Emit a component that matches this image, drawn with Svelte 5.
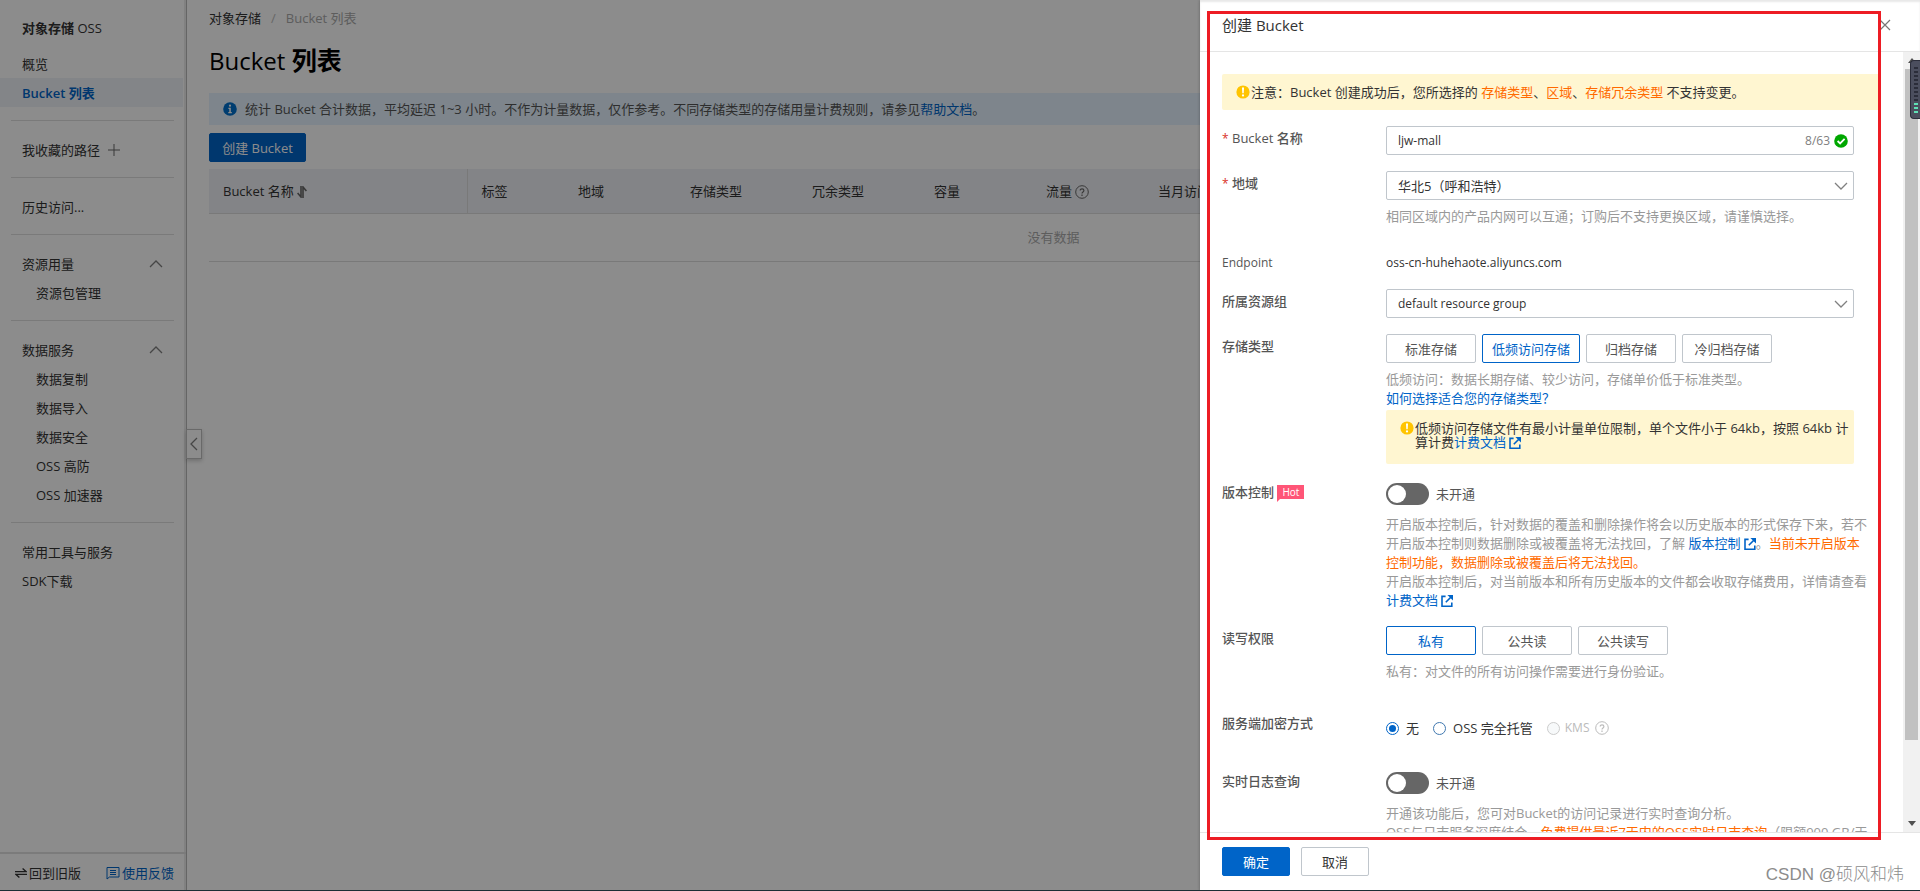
<script lang="ts">
  type NavItem = { label: string; active?: boolean; child?: boolean; icon?: "plus" | "up" };

  const navGroups: NavItem[][] = [
    [{ label: "概览" }, { label: "Bucket 列表", active: true }],
    [{ label: "我收藏的路径", icon: "plus" }],
    [{ label: "历史访问..." }],
    [
      { label: "资源用量", icon: "up" },
      { label: "资源包管理", child: true },
    ],
    [
      { label: "数据服务", icon: "up" },
      { label: "数据复制", child: true },
      { label: "数据导入", child: true },
      { label: "数据安全", child: true },
      { label: "OSS 高防", child: true },
      { label: "OSS 加速器", child: true },
    ],
    [{ label: "常用工具与服务" }, { label: "SDK下载" }],
  ];

  const storageTypes = ["标准存储", "低频访问存储", "归档存储", "冷归档存储"];
  const aclTypes = ["私有", "公共读", "公共读写"];

  let bucketName = $state("ljw-mall");
  let storageType = $state("低频访问存储");
  let acl = $state("私有");
  let encryption = $state("none");
  let versioning = $state(false);
  let realtimeLog = $state(false);
</script>

{#snippet chevron(cls: string)}
  <svg class="chevron {cls}" viewBox="0 0 14 8" aria-hidden="true">
    <path d="M1 1l6 6 6-6" fill="none" stroke="currentColor" stroke-width="1.3" />
  </svg>
{/snippet}

{#snippet warnIcon()}
  <svg class="icon warn" viewBox="0 0 14 14" aria-hidden="true">
    <circle cx="7" cy="7" r="6.6" fill="#ffc400" />
    <path d="M6 2.6h2l-.3 5.6H6.3z" fill="#fff" />
    <circle cx="7" cy="10.4" r="1.1" fill="#fff" />
  </svg>
{/snippet}

{#snippet helpIcon()}
  <svg class="icon" viewBox="0 0 14 14" fill="none" stroke="currentColor" aria-hidden="true">
    <circle cx="7" cy="7" r="6.3" />
    <path d="M5.2 5.6c0-2.4 3.7-2.3 3.7 0 0 1.4-1.9 1.4-1.9 3M7 9.6v1.3" stroke-width="1.2" />
  </svg>
{/snippet}

{#snippet extIcon()}
  <svg class="ext" viewBox="0 0 12 12" fill="none" stroke="currentColor" aria-hidden="true">
    <path d="M4.6 1.4H1v9.8h9.8V7.6M4.8 7.2l5-5" stroke-width="1.6" />
    <path d="M6.4 0H12v5.6z" fill="currentColor" stroke="none" />
  </svg>
{/snippet}

<div class="page" lang="zh-CN">
  <aside class="sidebar">
    <div class="product">对象存储 <span>OSS</span></div>
    <nav>
      {#each navGroups as group}
        <ul>
          {#each group as item}
            <li>
              <a href="#nav" class:active={item.active} class:child={item.child}>
                {item.label}
                {#if item.icon === "plus"}
                  <svg class="plus" viewBox="0 0 12 12" aria-hidden="true">
                    <path d="M6 0v12M0 6h12" stroke="currentColor" />
                  </svg>
                {:else if item.icon === "up"}
                  {@render chevron("up")}
                {/if}
              </a>
            </li>
          {/each}
        </ul>
      {/each}
    </nav>
    <div class="side-footer">
      <a href="#old">
        <svg class="swap" viewBox="0 0 12 10" fill="none" stroke="currentColor" aria-hidden="true">
          <path d="M0 3.6h11L7.6.6M12 6.4H1l3.4 3" stroke-width="1.4" />
        </svg>回到旧版
      </a>
      <a href="#feedback" class="link">
        <svg class="icon" viewBox="0 0 14 14" fill="none" stroke="currentColor" aria-hidden="true">
          <path d="M1 1.5h12v9.5H3.5L1 13zM4 4.5h6M4 6.5h6M4 8.5h6" />
        </svg>使用反馈
      </a>
    </div>
    <button class="collapse" aria-label="收起">{@render chevron("left")}</button>
  </aside>

  <main>
    <div class="breadcrumb"><a href="#oss">对象存储</a><i>/</i><span>Bucket 列表</span></div>
    <h1><span>Bucket</span> 列表</h1>
    <div class="notice">
      <svg class="icon" viewBox="0 0 14 14" aria-hidden="true">
        <circle cx="7" cy="7" r="6.8" fill="#0070cc" />
        <path d="M5.4 5.8h2.4V10h1v1.2H5.3V10h1V7h-.9z" fill="#fff" />
        <circle cx="7" cy="3.7" r="1.1" fill="#fff" />
      </svg>
      <p>统计 Bucket 合计数据，平均延迟 1~3 小时。不作为计量数据，仅作参考。不同存储类型的存储用量计费规则，请参见<a class="link" href="#help">帮助文档</a>。</p>
    </div>
    <button class="btn primary create">创建 Bucket</button>
    <table>
      <colgroup>
        <col class="c-name" /><col class="c-tag" /><col class="c-mid" /><col class="c-type" />
        <col class="c-type" /><col class="c-mid" /><col class="c-mid" /><col />
      </colgroup>
      <thead>
        <tr>
          <th>
            Bucket 名称
            <svg class="sort" viewBox="0 0 10 12" fill="none" stroke="currentColor" aria-hidden="true">
              <path d="M4 0v11L.6 7M6 12V1l3.4 4" stroke-width="1.6" />
            </svg>
          </th>
          <th>标签</th>
          <th>地域</th>
          <th>存储类型</th>
          <th>冗余类型</th>
          <th>容量</th>
          <th>流量 {@render helpIcon()}</th>
          <th>当月访问次数</th>
        </tr>
      </thead>
      <tbody>
        <tr><td colspan="8">没有数据</td></tr>
      </tbody>
    </table>
  </main>

  <div class="overlay"></div>

  <section class="drawer" role="dialog" aria-labelledby="drawer-title">
    <header>
      <h2 id="drawer-title">创建 Bucket</h2>
      <button class="close" aria-label="关闭">
        <svg viewBox="0 0 12 12" aria-hidden="true">
          <path d="M1 1l10 10M11 1L1 11" stroke="currentColor" stroke-width="1.2" />
        </svg>
      </button>
    </header>

    <div class="body">
      <form>
        <div class="tip">
          {@render warnIcon()}注意：Bucket 创建成功后，您所选择的 <em>存储类型</em>、<em>区域</em>、<em>存储冗余类型</em> 不支持变更。
        </div>

        <div class="row">
          <label class="label" for="bucket-name"><b>*</b> Bucket 名称</label>
          <div class="control field">
            <input id="bucket-name" type="text" maxlength="63" bind:value={bucketName} />
            <span class="count">{bucketName.length}/63</span>
            <svg class="icon" viewBox="0 0 14 14" aria-hidden="true">
              <circle cx="7" cy="7" r="6.8" fill="#00a700" />
              <path d="M3.6 7l2.5 2.4 4.5-4.6" fill="none" stroke="#fff" stroke-width="1.8" />
            </svg>
          </div>
        </div>

        <div class="row">
          <label class="label" for="region"><b>*</b> 地域</label>
          <div class="control">
            <div class="field">
              <select id="region"><option>华北5（呼和浩特）</option></select>
              {@render chevron("")}
            </div>
            <p class="help loose">相同区域内的产品内网可以互通；订购后不支持更换区域，请谨慎选择。</p>
          </div>
        </div>

        <div class="row endpoint">
          <span class="label latin">Endpoint</span>
          <div class="control latin">oss-cn-huhehaote.aliyuncs.com</div>
        </div>

        <div class="row">
          <label class="label" for="group">所属资源组</label>
          <div class="control field">
            <select id="group" class="latin"><option>default resource group</option></select>
            {@render chevron("")}
          </div>
        </div>

        <div class="row">
          <span class="label">存储类型</span>
          <div class="control">
            <div class="options">
              {#each storageTypes as type}
                <button type="button" class="btn" class:selected={type === storageType} onclick={() => (storageType = type)}>{type}</button>
              {/each}
            </div>
            <p class="help">
              低频访问：数据长期存储、较少访问，存储单价低于标准类型。<br />
              <a class="link" href="#choose">如何选择适合您的存储类型？</a>
            </p>
            <div class="subtip">
              {@render warnIcon()}
              <p>低频访问存储文件有最小计量单位限制，单个文件小于 64kb，按照 64kb 计<br />算计费<a class="link" href="#price">计费文档 {@render extIcon()}</a></p>
            </div>
          </div>
        </div>

        <div class="row">
          <label class="label" for="versioning">版本控制 <span class="hot">Hot</span></label>
          <div class="control">
            <div class="toggle">
              <input id="versioning" type="checkbox" role="switch" bind:checked={versioning} />
              <span>{versioning ? "已开通" : "未开通"}</span>
            </div>
            <p class="help">
              开启版本控制后，针对数据的覆盖和删除操作将会以历史版本的形式保存下来，若不<br />
              开启版本控制则数据删除或被覆盖将无法找回，了解 <a class="link" href="#version">版本控制 {@render extIcon()}</a>。<em>当前未开启版本</em><br />
              <em>控制功能，数据删除或被覆盖后将无法找回。</em><br />
              开启版本控制后，对当前版本和所有历史版本的文件都会收取存储费用，详情请查看<br />
              <a class="link" href="#price">计费文档 {@render extIcon()}</a>
            </p>
          </div>
        </div>

        <div class="row">
          <span class="label">读写权限</span>
          <div class="control">
            <div class="options">
              {#each aclTypes as type}
                <button type="button" class="btn" class:selected={type === acl} onclick={() => (acl = type)}>{type}</button>
              {/each}
            </div>
            <p class="help loose">私有：对文件的所有访问操作需要进行身份验证。</p>
          </div>
        </div>

        <div class="row encryption">
          <span class="label">服务端加密方式</span>
          <div class="control radios">
            <label><input type="radio" name="enc" value="none" bind:group={encryption} />无</label>
            <label><input type="radio" name="enc" value="oss" bind:group={encryption} />OSS 完全托管</label>
            <label class="disabled"><input type="radio" name="enc" value="kms" disabled bind:group={encryption} />KMS {@render helpIcon()}</label>
          </div>
        </div>

        <div class="row">
          <label class="label" for="realtime">实时日志查询</label>
          <div class="control">
            <div class="toggle">
              <input id="realtime" type="checkbox" role="switch" bind:checked={realtimeLog} />
              <span>{realtimeLog ? "已开通" : "未开通"}</span>
            </div>
            <p class="help">
              开通该功能后，您可对Bucket的访问记录进行实时查询分析。<br />
              OSS与日志服务深度结合，<em>免费提供最近7天内的OSS实时日志查询</em>（限额900 GB/天
            </p>
          </div>
        </div>
      </form>
      <div class="scrollbar" aria-hidden="true">
        <svg viewBox="0 0 17 17"><path d="M5 11l4-5 4 5z" fill="#505050" /></svg>
        <div class="track"><div class="thumb"></div></div>
        <svg viewBox="0 0 17 17"><path d="M5 6l4 5 4-5z" fill="#505050" /></svg>
      </div>
    </div>

    <footer>
      <button class="btn primary">确定</button>
      <button class="btn">取消</button>
    </footer>

    <div class="marker"></div>
    <div class="meter" aria-hidden="true"></div>
    <div class="watermark">CSDN @硕风和炜</div>
  </section>

  <div class="edge"></div>
</div>

<style>
  :global(body) {
    margin: 0;
    overflow: hidden;
  }

  .page {
    position: relative;
    display: flex;
    height: 100vh;
    overflow: hidden;
    background: #fff;
    color: #333;
    font: 13px/20px "Open Sans", "Noto Sans CJK SC", sans-serif;
  }

  .page * {
    box-sizing: border-box;
  }

  a {
    color: inherit;
    text-decoration: none;
  }

  p,
  ul,
  h1,
  h2 {
    margin: 0;
    padding: 0;
  }

  ul {
    list-style: none;
  }

  em {
    color: #ff6a00;
    font-style: normal;
  }

  button,
  input,
  select {
    font: inherit;
    color: inherit;
  }

  .link {
    color: #0064c8;
  }

  .latin {
    font-size: 12px;
  }

  .icon {
    width: 14px;
    height: 14px;
    flex: none;
  }

  .chevron {
    width: 14px;
    height: 8px;
    color: #808080;
  }

  .chevron.up {
    transform: rotate(180deg);
    margin-left: auto;
  }

  .chevron.left {
    transform: rotate(90deg);
    flex: none;
  }

  .ext {
    width: 12px;
    height: 12px;
    vertical-align: -2px;
  }

  /* sidebar */
  .sidebar {
    position: relative;
    display: flex;
    flex: none;
    flex-direction: column;
    width: 187px;
    border-right: 1px solid #b8b8b8;
    box-shadow: inset -2px 0 0 #ebebeb;
  }

  .product {
    padding: 18px 22px 11px;
    font-weight: 600;
  }

  .product span {
    font-weight: 400;
  }

  nav {
    flex: 1;
  }

  nav ul + ul::before {
    content: "";
    display: block;
    margin: 13px 12px 14px 11px;
    border-top: 1px solid #dedede;
  }

  nav a {
    display: flex;
    align-items: center;
    height: 29px;
    margin-right: 3px;
    padding: 0 20px 0 22px;
  }

  nav a.child {
    padding-left: 36px;
  }

  nav a.active {
    background: #eff3f8;
    color: #0064c8;
    font-weight: 600;
  }

  .plus {
    width: 12px;
    height: 12px;
    margin-left: 8px;
    color: #666;
  }

  .side-footer {
    display: flex;
    align-items: center;
    justify-content: space-between;
    height: 39px;
    padding: 0 12px 0 15px;
    border-top: 2px solid #e0e0e0;
  }

  .side-footer a {
    display: flex;
    align-items: center;
    gap: 2px;
  }

  .swap {
    width: 12px;
    height: 10px;
  }

  .collapse {
    position: absolute;
    top: 429px;
    left: 186px;
    display: flex;
    align-items: center;
    justify-content: center;
    width: 16px;
    height: 30px;
    padding: 0;
    border: 1px solid #c0c0c0;
    background: #fff;
    box-shadow: 0 2px 4px rgba(0, 0, 0, 0.2);
  }

  /* bucket list */
  main {
    flex: 1;
    min-width: 0;
    padding: 8px 22px;
  }

  .breadcrumb {
    display: flex;
    gap: 10px;
    color: #aaa;
  }

  .breadcrumb a {
    color: #333;
  }

  .breadcrumb i {
    color: #bbb;
    font-style: normal;
  }

  h1 {
    margin: 14px 0;
    color: #000;
    font-size: 25px;
    font-weight: 600;
    line-height: 36px;
  }

  h1 span {
    font-size: 24px;
    font-weight: 500;
  }

  .notice {
    display: flex;
    align-items: center;
    gap: 8px;
    height: 32px;
    padding: 0 14px;
    background: #e6f3ff;
    color: #555;
    white-space: nowrap;
  }

  .btn {
    min-width: 90px;
    height: 29px;
    padding: 0 9px;
    border: 1px solid #c0c6cc;
    border-radius: 2px;
    background: #fff;
    color: #333;
  }

  .btn.primary {
    border-color: #0064c8;
    background: #0064c8;
    color: #fff;
  }

  .create {
    display: block;
    min-width: 97px;
    margin: 8px 0 7px;
  }

  table {
    width: 100%;
    border-collapse: collapse;
    table-layout: fixed;
  }

  .c-name {
    width: 258px;
  }

  .c-tag {
    width: 97px;
  }

  .c-mid {
    width: 112px;
  }

  .c-type {
    width: 122px;
  }

  th {
    height: 44px;
    padding: 0 14px;
    border-bottom: 1px solid #dcdcdc;
    background: #eff1f6;
    font-weight: 400;
    text-align: left;
    white-space: nowrap;
  }

  th:first-child {
    border-right: 1px solid #dcdcdc;
  }

  th svg {
    color: #666;
    vertical-align: -3px;
  }

  th .sort {
    width: 10px;
    height: 12px;
    vertical-align: -2px;
  }

  td {
    height: 48px;
    border-bottom: 1px solid #dcdcdc;
    color: #aaa;
    text-align: center;
  }

  .overlay {
    position: absolute;
    inset: 0;
    background: rgba(0, 0, 0, 0.45);
  }

  /* drawer */
  .drawer {
    position: absolute;
    top: 0;
    right: 0;
    bottom: 0;
    display: flex;
    flex-direction: column;
    width: 720px;
    background: #fff;
    box-shadow: 0 0 3px rgba(0, 0, 0, 0.3);
  }

  header {
    display: flex;
    align-items: center;
    justify-content: space-between;
    height: 52px;
    padding: 0 29px 2px 22px;
    border-bottom: 1px solid #e5e5e5;
    box-shadow: inset 0 2px 2px #e8e8e8;
  }

  h2 {
    font-size: 15px;
    font-weight: 400;
  }

  .close {
    width: 12px;
    height: 12px;
    padding: 0;
    border: 0;
    background: none;
    color: #777;
  }

  .close svg {
    display: block;
  }

  .body {
    display: flex;
    flex: 1;
    min-height: 0;
    overflow: hidden;
  }

  form {
    flex: 1;
    height: 100%;
    padding: 22px 22px 0;
    overflow: hidden;
  }

  .tip {
    display: flex;
    align-items: center;
    height: 36px;
    margin-bottom: 16px;
    padding: 0 14px;
    border-radius: 2px;
    background: #fff6d1;
    white-space: pre;
  }

  .tip .icon {
    margin-right: 1px;
  }

  .row {
    display: flex;
    margin-bottom: 16px;
    padding-right: 27px;
  }

  .label {
    flex: none;
    width: 164px;
    line-height: 24px;
    color: #555;
    font-weight: 500;
  }

  .label b {
    color: #d93026;
    font-size: 12px;
    font-weight: 400;
  }

  .control {
    flex: 1;
    min-width: 0;
  }

  .field {
    position: relative;
    display: flex;
    align-items: center;
    height: 29px;
    padding-right: 5px;
    border: 1px solid #c0c6cc;
    border-radius: 2px;
  }

  .field input,
  .field select {
    flex: 1;
    min-width: 0;
    height: 27px;
    padding: 0 11px;
    border: 0;
    outline: 0;
    background: none;
    appearance: none;
  }

  .field input {
    font-size: 12px;
  }

  .field .latin {
    font-size: 12px;
  }

  .field .chevron {
    pointer-events: none;
  }

  .count {
    margin-right: 4px;
    color: #808080;
    font-size: 12px;
  }

  .endpoint {
    height: 22px;
    line-height: 24px;
  }

  .help {
    margin-top: 7px;
    color: #999;
    line-height: 19px;
    white-space: nowrap;
  }

  .help.loose {
    padding-bottom: 9px;
  }

  .options {
    display: flex;
    gap: 6px;
  }

  .options .btn {
    color: #555;
  }

  .options .btn.selected {
    border-color: #0064c8;
    color: #0064c8;
  }

  .subtip {
    display: flex;
    gap: 1px;
    height: 54px;
    margin-top: 2px;
    padding: 11px 14px;
    border-radius: 2px;
    background: #fff6d1;
    line-height: 14px;
    white-space: nowrap;
  }

  .hot {
    position: relative;
    display: inline-block;
    height: 14px;
    padding: 0 5px;
    background: #ff5577;
    color: #fff;
    font-size: 10px;
    font-weight: 400;
    line-height: 14px;
    vertical-align: 1px;
  }

  .hot::after {
    content: "";
    position: absolute;
    top: 14px;
    left: 0;
    border-top: 3px solid #ff5577;
    border-right: 3px solid transparent;
  }

  .toggle {
    display: flex;
    align-items: center;
    gap: 7px;
    height: 28px;
    color: #555;
  }

  .toggle input {
    width: 43px;
    height: 22px;
    margin: 0;
    padding: 2px;
    border-radius: 11px;
    background: #666;
    appearance: none;
  }

  .toggle input::before {
    content: "";
    display: block;
    width: 18px;
    height: 18px;
    border-radius: 50%;
    background: #fff;
  }

  .toggle input:checked {
    padding-left: 23px;
    background: #0064c8;
  }

  .encryption {
    padding-top: 5px;
  }

  .radios {
    display: flex;
    align-items: center;
    gap: 14px;
    height: 42px;
    padding-bottom: 8px;
  }

  .radios label {
    display: flex;
    align-items: center;
    gap: 7px;
  }

  .radios label.disabled {
    gap: 5px;
    color: #bbb;
    font-size: 12px;
  }

  .radios input {
    width: 13px;
    height: 13px;
    margin: 0;
    border: 1px solid #4078b0;
    border-radius: 50%;
    background: #fff;
    appearance: none;
  }

  .radios input:checked {
    border-color: #0064c8;
    background: #0064c8;
    background-clip: content-box;
    padding: 2px;
  }

  .radios input:disabled {
    border-color: #ccc;
    background: #f7f9fa;
  }

  .scrollbar {
    display: flex;
    flex: none;
    flex-direction: column;
    width: 17px;
    background: #f1f1f1;
  }

  .scrollbar svg {
    width: 17px;
    height: 17px;
  }

  .track {
    flex: 1;
    padding: 0 2px;
  }

  .thumb {
    height: 90%;
    background: #c1c1c1;
  }

  footer {
    display: flex;
    gap: 11px;
    height: 59px;
    padding: 14px 22px;
    border-top: 1px solid #e5e5e5;
  }

  footer .btn {
    min-width: 68px;
  }

  .marker {
    position: absolute;
    inset: 11px 39px 51px 7px;
    border: 3px solid #ed1c24;
    pointer-events: none;
  }

  .meter {
    position: absolute;
    top: 60px;
    right: 0;
    width: 10px;
    height: 59px;
    border: 1px solid #2b2d3a;
    border-right: 0;
    border-radius: 4px 0 0 4px;
    background: #4b4e5e;
  }

  .meter::before,
  .meter::after {
    content: "";
    position: absolute;
    left: 3px;
    width: 4px;
  }

  .meter::before {
    top: 6px;
    height: 35px;
    background: repeating-linear-gradient(#2b2d3a 0 2px, transparent 2px 4px);
  }

  .meter::after {
    top: 42px;
    height: 10px;
    background: repeating-linear-gradient(#5fe0b5 0 2px, transparent 2px 4px);
  }

  .watermark {
    position: absolute;
    right: 16px;
    bottom: 6px;
    color: #8c8c8c;
    font: 300 17px/20px "Liberation Sans", "Noto Sans CJK SC", sans-serif;
    white-space: nowrap;
  }

  .edge {
    position: absolute;
    right: 0;
    bottom: 0;
    left: 0;
    height: 1px;
    background: #1b2f35;
  }
</style>
